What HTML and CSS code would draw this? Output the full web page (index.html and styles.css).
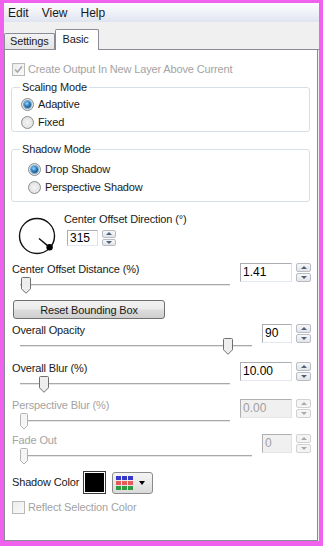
FILE: index.html
```html
<!DOCTYPE html>
<html>
<head>
<meta charset="utf-8">
<title>Drop Shadow</title>
<link rel="stylesheet" href="styles.css">
</head>
<body>
<div class="window">
  <div class="menubar">
    <span class="menu">Edit</span>
    <span class="menu">View</span>
    <span class="menu">Help</span>
  </div>
  <div class="tabstrip">
    <div class="tab">Settings</div>
    <div class="tab active">Basic</div>
  </div>
  <div class="panel">
    <div class="check disabled row-create">
      <span class="cbox"><svg width="11" height="11" viewBox="0 0 11 11"><path d="M2 5.5 L4.5 8 L9 2.5" fill="none" stroke="#a8a8a8" stroke-width="1.6"/></svg></span>
      <span>Create Output In New Layer Above Current</span>
    </div>

    <fieldset class="group g-scaling">
      <legend>Scaling Mode</legend>
      <div class="radio-row"><span class="radio on"></span>Adaptive</div>
      <div class="radio-row"><span class="radio"></span>Fixed</div>
    </fieldset>

    <fieldset class="group g-shadow">
      <legend>Shadow Mode</legend>
      <div class="radio-row indent"><span class="radio on"></span>Drop Shadow</div>
      <div class="radio-row indent"><span class="radio"></span>Perspective Shadow</div>
    </fieldset>

    <div class="dial-row">
      <svg class="dial" width="40" height="40" viewBox="0 0 40 40">
        <circle cx="20" cy="20" r="17.5" fill="none" stroke="#111" stroke-width="1.4"/>
        <line x1="22" y1="22.5" x2="32.6" y2="31.3" stroke="#111" stroke-width="1.5"/>
        <circle cx="32.6" cy="31.3" r="3.2" fill="#000"/>
      </svg>
      <div class="dial-ctrl">
        <div class="lbl">Center Offset Direction (°)</div>
        <div class="spin sm">
          <span class="input w-dir">315</span>
          <span class="spinner"><span class="sb up"></span><span class="sb down"></span></span>
        </div>
      </div>
    </div>

    <div class="srow mt7">
      <div class="sleft">
        <div class="lbl">Center Offset Distance (%)</div>
        <div class="track"><svg class="thumb" style="left:1px" width="10" height="17" viewBox="0 0 10 17"><path d="M1.5 0.5 H8.5 Q9.5 0.5 9.5 1.5 V11.8 L5 16.3 L0.5 11.8 V1.5 Q0.5 0.5 1.5 0.5 Z" fill="#eeeeee" stroke="#6f6f6f"/></svg></div>
      </div>
      <div class="spin">
        <span class="input wide">1.41</span>
        <span class="spinner"><span class="sb up"></span><span class="sb down"></span></span>
      </div>
    </div>

    <button class="btn">Reset Bounding Box</button>

    <div class="srow mt5">
      <div class="sleft">
        <div class="lbl">Overall Opacity</div>
        <div class="track"><svg class="thumb" style="left:203px" width="10" height="17" viewBox="0 0 10 17"><path d="M1.5 0.5 H8.5 Q9.5 0.5 9.5 1.5 V11.8 L5 16.3 L0.5 11.8 V1.5 Q0.5 0.5 1.5 0.5 Z" fill="#eeeeee" stroke="#6f6f6f"/></svg></div>
      </div>
      <div class="spin">
        <span class="input narrow">90</span>
        <span class="spinner"><span class="sb up"></span><span class="sb down"></span></span>
      </div>
    </div>

    <div class="srow mt8">
      <div class="sleft">
        <div class="lbl">Overall Blur (%)</div>
        <div class="track"><svg class="thumb" style="left:19px" width="10" height="17" viewBox="0 0 10 17"><path d="M1.5 0.5 H8.5 Q9.5 0.5 9.5 1.5 V11.8 L5 16.3 L0.5 11.8 V1.5 Q0.5 0.5 1.5 0.5 Z" fill="#eeeeee" stroke="#6f6f6f"/></svg></div>
      </div>
      <div class="spin">
        <span class="input wide">10.00</span>
        <span class="spinner"><span class="sb up"></span><span class="sb down"></span></span>
      </div>
    </div>

    <div class="srow mt7 disabled">
      <div class="sleft">
        <div class="lbl">Perspective Blur (%)</div>
        <div class="track"><svg class="thumb" style="left:0px" width="8" height="17" viewBox="0 0 8 17"><path d="M1.5 0.5 H6.5 Q7.5 0.5 7.5 1.5 V12.5 L4 16 L0.5 12.5 V1.5 Q0.5 0.5 1.5 0.5 Z" fill="#f5f5f5" stroke="#b4b4b4"/></svg></div>
      </div>
      <div class="spin">
        <span class="input wide">0.00</span>
        <span class="spinner"><span class="sb up"></span><span class="sb down"></span></span>
      </div>
    </div>

    <div class="srow mt5 disabled">
      <div class="sleft">
        <div class="lbl">Fade Out</div>
        <div class="track"><svg class="thumb" style="left:0px" width="8" height="17" viewBox="0 0 8 17"><path d="M1.5 0.5 H6.5 Q7.5 0.5 7.5 1.5 V12.5 L4 16 L0.5 12.5 V1.5 Q0.5 0.5 1.5 0.5 Z" fill="#f5f5f5" stroke="#b4b4b4"/></svg></div>
      </div>
      <div class="spin">
        <span class="input narrow">0</span>
        <span class="spinner"><span class="sb up"></span><span class="sb down"></span></span>
      </div>
    </div>

    <div class="color-row">
      <span class="lbl">Shadow Color</span>
      <span class="swatch"><span class="swatch-fill"></span></span>
      <span class="pick">
        <span class="grid">
          <span class="c b"></span><span class="c b"></span><span class="c b"></span>
          <span class="c r"></span><span class="c r"></span><span class="c r"></span>
          <span class="c g"></span><span class="c g"></span><span class="c g"></span>
        </span>
        <span class="caret"></span>
      </span>
    </div>

    <div class="check disabled row-reflect">
      <span class="cbox"></span>
      <span>Reflect Selection Color</span>
    </div>
  </div>
</div>
</body>
</html>
```
FILE: styles.css
```css
* { box-sizing: border-box; }
html, body { margin: 0; }
body {
  background: #f062ee;
  padding: 3px 4px 0 4px;
  font-family: "Liberation Sans", Arial, sans-serif;
  font-size: 11px;
  letter-spacing: -0.15px;
  color: #1a1a1a;
}
.window {
  width: 315px;
  height: 538px;
  background: #f0f0f0;
  display: flex;
  flex-direction: column;
}
.menubar {
  height: 19px;
  display: flex;
  align-items: center;
  gap: 13px;
  padding: 1px 0 0 4px;
  font-size: 12px;
  letter-spacing: 0;
  background: linear-gradient(#fbfbfd 0%, #f1f3f8 45%, #dfe4ef 100%);
}
.tabstrip {
  height: 28px;
  display: flex;
  align-items: flex-end;
  border-bottom: 1px solid #898c95;
  background: #f0f0f0;
}
.tab {
  height: 16px;
  padding: 0 5px;
  line-height: 15px;
  border: 1px solid #898c95;
  border-bottom: none;
  background: linear-gradient(#f3f3f3, #e4e4e4);
  border-radius: 2px 2px 0 0;
}
.tab.active {
  height: 21px;
  width: 44px;
  margin-bottom: -1px;
  padding: 0 7px;
  line-height: 19px;
  background: #fff;
}
.panel {
  flex: 1;
  margin-right: 1px;
  background: #fff;
  border: 1px solid #898c95;
  border-top: none;
  padding: 0 6px;
  display: flex;
  flex-direction: column;
  align-items: stretch;
}
.lbl { height: 13px; line-height: 13px; white-space: nowrap; }
.disabled, .disabled .lbl { color: #a3a3a3; }

.check {
  height: 14px;
  display: flex;
  align-items: center;
  gap: 3px;
  padding-left: 1px;
}
.row-create { margin-top: 12px; }
.row-reflect { margin-top: 6px; }
.cbox {
  width: 13px;
  height: 13px;
  border: 1px solid #b9b9b9;
  background: linear-gradient(135deg, #ececec, #fafafa);
  display: flex;
  align-items: center;
  justify-content: center;
}

.group {
  margin: 0 1px 0 0;
  border: 1px solid #d5dfe5;
  border-radius: 3px;
  min-width: 0;
}
.group legend {
  padding: 0 2px;
  margin-left: -2px;
  line-height: 13px;
  height: 13px;
}
.g-scaling { margin-top: 5px; padding: 1px 10px 0 10px; }
.g-shadow { margin-top: 11px; padding: 4px 10px 5px 10px; }
.radio-row {
  height: 18px;
  display: flex;
  align-items: center;
  gap: 4px;
}
.radio-row .radio { margin-left: -1px; }
.radio-row.indent .radio { margin-left: 6px; }
.radio {
  width: 13px;
  height: 13px;
  border-radius: 50%;
  border: 1px solid #8a8c8e;
  background: radial-gradient(circle at 50% 50%, #f4f4f4 0, #e2e2e2 70%, #d6d6d6 100%);
  display: flex;
  align-items: center;
  justify-content: center;
}
.radio.on::after {
  content: "";
  width: 7px;
  height: 7px;
  border-radius: 50%;
  background: radial-gradient(circle at 40% 35%, #9fdcff 0, #3c8fd0 35%, #17436f 80%);
  box-shadow: 0 0 0 1px #6ea7d3;
}

.dial-row {
  margin-top: 11px;
  display: flex;
  align-items: flex-start;
}
.dial { margin: 3px 0 0 6px; display: block; }
.dial-ctrl { margin-left: 7px; }
.dial-ctrl .spin { margin: 4px 0 0 3px; }

.srow {
  height: 30px;
  display: flex;
  align-items: flex-start;
}
.mt5 { margin-top: 5px; }
.mt7 { margin-top: 7px; }
.mt8 { margin-top: 8px; }
.sleft { flex: 1; margin-right: 10px; }
.sleft .lbl { padding-left: 1px; }
.track {
  position: relative;
  height: 17px;
  padding-top: 8px;
  margin-left: 9px;
}
.track::before {
  content: "";
  display: block;
  height: 1px;
  background: #a9a9a9;
  border-bottom: 1px solid #e6e6e6;
  box-sizing: content-box;
}
.thumb { position: absolute; top: 1px; display: block; }

.spin { display: flex; gap: 4px; }
.input {
  height: 19px;
  border: 1px solid #abadb3;
  border-right-color: #dbdfe6;
  border-bottom-color: #e3e9ef;
  background: #fff;
  padding: 0 2px;
  line-height: 17px;
  font-size: 12px;
  letter-spacing: 0;
  color: #000;
}
.input.wide { width: 52px; }
.input.narrow { width: 30px; }
.input.w-dir { width: 31px; }
.spin.sm .input { height: 16px; line-height: 14px; }
.spinner {
  width: 15px;
  height: 19px;
  display: flex;
  flex-direction: column;
  gap: 1px;
}
.spin.sm .spinner { width: 14px; height: 16px; }
.sb {
  flex: 1;
  border: 1px solid #b8bcc4;
  border-radius: 2px;
  background: linear-gradient(#f7f7f7, #e3e4e6);
  display: flex;
  align-items: center;
  justify-content: center;
}
.sb::before {
  content: "";
  width: 0;
  height: 0;
  border-left: 3px solid transparent;
  border-right: 3px solid transparent;
}
.sb.up::before { border-bottom: 3px solid #4c607f; }
.sb.down::before { border-top: 3px solid #4c607f; }
.disabled .input {
  background: #f0f0f0;
  border-color: #afafaf;
  border-right-color: #e2e2e2;
  border-bottom-color: #e6e6e6;
  color: #a0a0a0;
}
.disabled .sb { border-color: #d2d2d2; background: #f4f4f4; }
.disabled .sb.up::before { border-bottom-color: #a9a9a9; }
.disabled .sb.down::before { border-top-color: #a9a9a9; }

.btn {
  margin: 7px 0 0 2px;
  width: 152px;
  height: 19px;
  padding: 0;
  border: 1px solid #707070;
  border-radius: 3px;
  background: linear-gradient(#f2f2f2 0%, #ebebeb 49%, #dddddd 51%, #cfcfcf 100%);
  font-family: "Liberation Sans", Arial, sans-serif;
  font-size: 11px;
  letter-spacing: -0.15px;
  color: #1a1a1a;
  align-self: flex-start;
}

.color-row {
  margin-top: 7px;
  height: 23px;
  display: flex;
  align-items: center;
  padding-left: 1px;
}
.swatch {
  margin-left: 4px;
  width: 23px;
  height: 23px;
  border: 1px solid #3a3a3a;
  padding: 1px;
  background: #fff;
}
.swatch-fill { display: block; width: 100%; height: 100%; background: #000; }
.pick {
  margin-left: 6px;
  width: 41px;
  height: 22px;
  border: 1px solid #8a8a8a;
  border-radius: 3px;
  background: linear-gradient(#f4f4f4 0%, #e9e9e9 50%, #d9d9d9 100%);
  display: flex;
  align-items: center;
  padding-left: 3px;
}
.grid {
  display: grid;
  grid-template-columns: repeat(3, 5px);
  grid-template-rows: repeat(3, 4px);
  gap: 1px;
}
.c.b { background: #3838c8; }
.c.r { background: #e65a5a; }
.c.g { background: #2f9a3f; }
.caret {
  margin-left: 6px;
  width: 0;
  height: 0;
  border-left: 3.5px solid transparent;
  border-right: 3.5px solid transparent;
  border-top: 4px solid #000;
}
```
